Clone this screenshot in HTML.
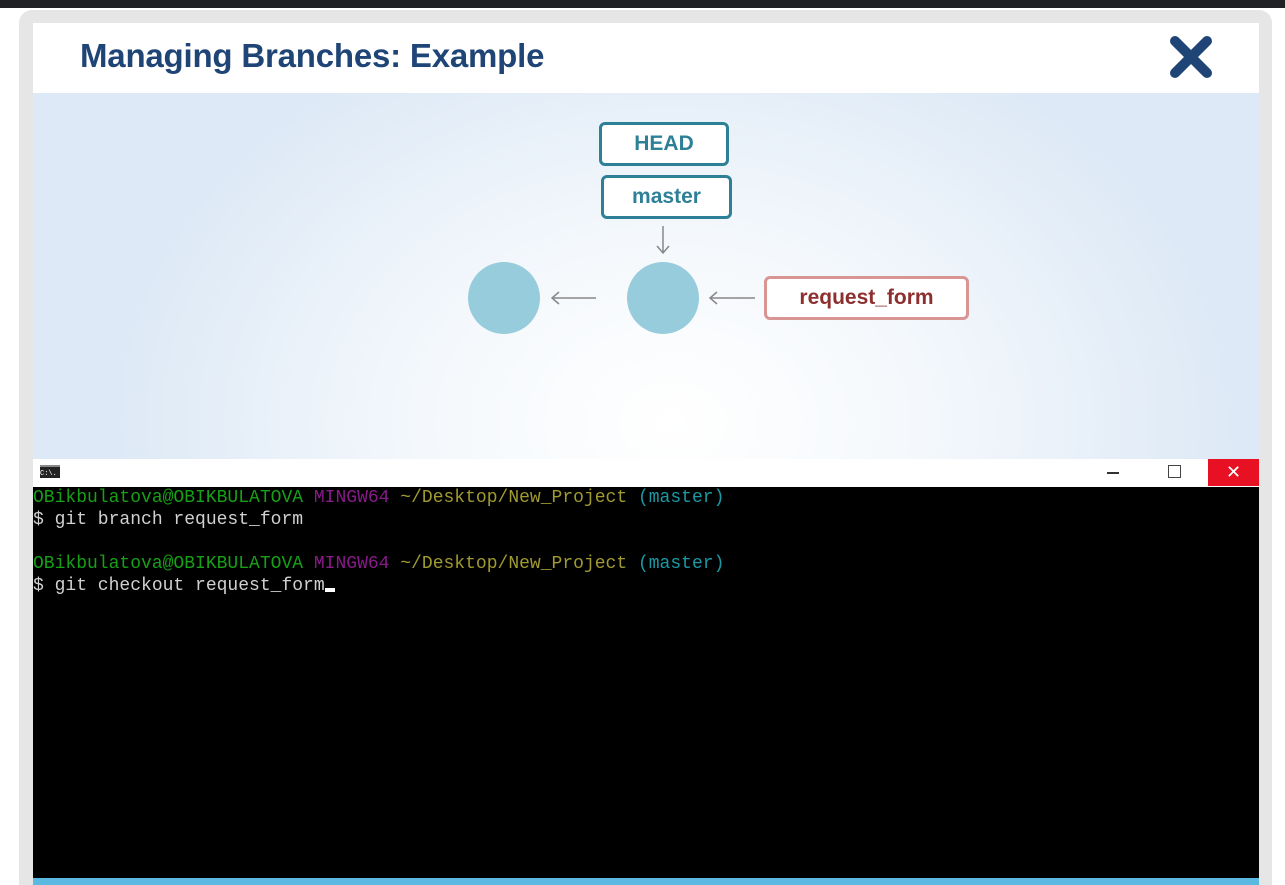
<!DOCTYPE html>
<html style="overflow:hidden;height:885px"><head><style>
body{margin:0;width:1285px;height:885px;background:#fff;position:relative;overflow:hidden;font-family:"Liberation Sans",sans-serif}
.top{position:absolute;left:0;top:0;width:1285px;height:8px;background:#202124}
.frame{position:absolute;left:19px;top:10px;width:1253px;height:875px;background:#e6e6e6;border-radius:13px 13px 0 0}
.head{position:absolute;left:33px;top:23px;width:1226px;height:70px;background:#fff}
.head h1{margin:0;position:absolute;left:47px;top:14px;font-size:33px;font-weight:bold;color:#1f4576;letter-spacing:-0.2px}
.diag{position:absolute;left:33px;top:93px;width:1226px;height:366px;background:radial-gradient(ellipse 560px 420px at 640px 330px,#ffffff 0%,#f4f8fc 45%,#dde9f6 100%)}
.box{position:absolute;box-sizing:border-box;background:#fff;border-radius:6px;border:3px solid #2e8097;color:#2e8097;font-weight:bold;font-size:21px;text-align:center;font-family:"Liberation Sans",sans-serif}
.c{position:absolute;width:72px;height:72px;border-radius:50%;background:#96ccdc}
.tb{position:absolute;left:33px;top:459px;width:1226px;height:28px;background:#fff}
.term{position:absolute;left:33px;top:487px;width:1226px;height:391px;background:#000;font-family:"Liberation Mono",monospace;font-size:18px;line-height:22px;color:#d0d0d0;white-space:pre}
.bar{position:absolute;left:33px;top:878px;width:1226px;height:7px;background:#5bb8e0}
</style></head><body>
<div class="top"></div>
<div class="frame"></div>
<div class="head"><h1>Managing Branches: Example</h1>
<svg style="position:absolute;left:1136px;top:12px" width="44" height="44" viewBox="0 0 44 44"><path d="M6 6L38 38M38 6L6 38" stroke="#1f4576" stroke-width="10" stroke-linecap="round"/></svg></div>
<div class="diag">
<div class="box" style="left:566px;top:29px;width:130px;height:44px;line-height:38px">HEAD</div>
<div class="box" style="left:568px;top:82px;width:131px;height:44px;line-height:38px">master</div>
<div class="box" style="left:731px;top:183px;width:205px;height:44px;line-height:38px;border-color:#d99494;color:#8e2f2f">request_form</div>
<div class="c" style="left:435px;top:169px"></div>
<div class="c" style="left:594px;top:169px"></div>
<svg style="position:absolute;left:0;top:0" width="1226" height="366"><g stroke="#888" stroke-width="1.5" fill="none"><path d="M630 133V160M624 153L630 160L636 153"/><path d="M563 205H519M526 199L519 205L526 211"/><path d="M722 205H677M684 199L677 205L684 211"/></g></svg>
</div>
<div class="tb">
<div style="position:absolute;left:7px;top:6px;width:20px;height:13px;background:#222;color:#fff;font-size:7px;line-height:14px;border-top:2px solid #888;box-sizing:border-box;font-family:'Liberation Mono'">C:\.</div>
<div style="position:absolute;left:1074px;top:13px;width:12px;height:1.5px;background:#333"></div>
<div style="position:absolute;left:1135px;top:6px;width:11px;height:11px;border:1.5px solid #444"></div>
<div style="position:absolute;left:1175px;top:0;width:51px;height:27px;background:#e81123;color:#fff;text-align:center;font-size:18px;line-height:26px">✕</div>
</div>
<div class="term"><span style="color:#16a016">OBikbulatova@OBIKBULATOVA</span> <span style="color:#8a1a8a">MINGW64</span> <span style="color:#a09a30">~/Desktop/New_Project</span> <span style="color:#1a9aa5">(master)</span>
$ git branch request_form

<span style="color:#16a016">OBikbulatova@OBIKBULATOVA</span> <span style="color:#8a1a8a">MINGW64</span> <span style="color:#a09a30">~/Desktop/New_Project</span> <span style="color:#1a9aa5">(master)</span>
$ git checkout request_form<span style="display:inline-block;width:10px;height:4px;background:#fff;vertical-align:-2px"></span></div>
<div class="bar"></div>
</body></html>
